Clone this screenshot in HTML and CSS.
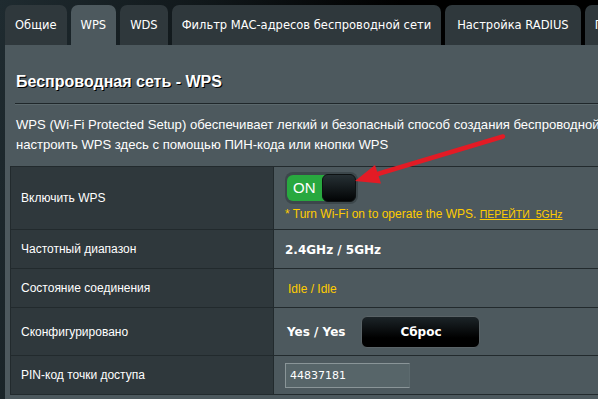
FILE: index.html
```html
<!DOCTYPE html>
<html lang="ru">
<head>
<meta charset="utf-8">
<title>WPS</title>
<link rel="stylesheet" href="styles.css">
</head>
<body>
<div class="page">
  <nav class="tabs">
    <div class="tab">Общие</div>
    <div class="tab active">WPS</div>
    <div class="tab">WDS</div>
    <div class="tab">Фильтр MAC-адресов беспроводной сети</div>
    <div class="tab tab-wide">Настройка RADIUS</div>
    <div class="tab">Профессионально</div>
  </nav>
  <main class="panel">
    <h1 class="title">Беспроводная сеть - WPS</h1>
    <div class="rule"></div>
    <p class="desc">WPS (Wi-Fi Protected Setup) обеспечивает легкий и безопасный способ создания беспроводной сети. Вы можете<br>настроить WPS здесь с помощью ПИН-кода или кнопки WPS</p>
    <table class="form">
      <tr class="r-enable">
        <th>Включить WPS</th>
        <td>
          <div class="toggle">
            <div class="toggle-on">ON</div>
            <div class="toggle-knob"></div>
          </div>
          <div class="note">* Turn Wi-Fi on to operate the WPS. <a class="note-link" href="#">ПЕРЕЙТИ&nbsp; 5GHz</a></div>
        </td>
      </tr>
      <tr class="r-std">
        <th>Частотный диапазон</th>
        <td><span class="bold-val">2.4GHz / 5GHz</span></td>
      </tr>
      <tr class="r-std">
        <th>Состояние соединения</th>
        <td><span class="status">Idle / Idle</span></td>
      </tr>
      <tr class="r-conf">
        <th>Сконфигурировано</th>
        <td>
          <div class="conf">
            <span class="bold-val">Yes / Yes</span>
            <button class="btn" type="button">Сброс</button>
          </div>
        </td>
      </tr>
      <tr class="r-std">
        <th>PIN-код точки доступа</th>
        <td><input class="pin" type="text" value="44837181"></td>
      </tr>
    </table>
  </main>
  <svg class="arrow" width="598" height="399" viewBox="0 0 598 399">
    <line x1="503" y1="136.5" x2="376" y2="174.5" stroke="#e31b25" stroke-width="4.5" stroke-linecap="round"/>
    <polygon points="355,181 375,165 381,183.5" fill="#e31b25"/>
  </svg>
</div>
</body>
</html>
```

FILE: styles.css
```css
html, body {
  margin: 0;
  padding: 0;
}
body {
  width: 598px;
  height: 399px;
  overflow: hidden;
  background: #000;
}
.page {
  position: relative;
  width: 598px;
  height: 399px;
  overflow: hidden;
  padding: 5px 0 0 5px;
  box-sizing: border-box;
  background: linear-gradient(100deg, #1f2b30 0%, #11181b 30%, #000 60%);
}
.tabs {
  display: flex;
  gap: 4px;
  height: 40px;
  white-space: nowrap;
}
.tab {
  flex: none;
  height: 40px;
  line-height: 40px;
  padding: 0 10px;
  background: #2f383c;
  border-radius: 7px 7px 0 0;
  color: #fff;
  font-family: "DejaVu Sans", Verdana, sans-serif;
  font-size: 11.5px;
}
.tab-wide {
  padding: 0 12px;
}
.tab.active {
  background: #4d595e;
}
.panel {
  width: 900px;
  height: 400px;
  background: #4d595e;
  padding-top: 27px;
}
.title {
  margin: 0;
  padding-left: 11px;
  font-family: "Liberation Sans", Arial, sans-serif;
  font-size: 16px;
  font-weight: bold;
  line-height: 19px;
  color: #fff;
  text-shadow: 1px 1px 0 #000;
}
.rule {
  margin: 12px 0 0 10px;
  height: 1px;
  background: #1f272a;
  border-bottom: 1px solid #5b686c;
}
.desc {
  margin: 10px 0 0 0;
  padding-left: 11px;
  font-family: "Liberation Sans", Arial, sans-serif;
  font-size: 13.1px;
  line-height: 20px;
  color: #fff;
  white-space: nowrap;
}
.form {
  margin: 11px 0 0 5px;
  border-collapse: collapse;
  width: 800px;
}
.form th, .form td {
  border: 1px solid #222a2d;
  padding: 0;
}
.form th {
  width: 252px;
  background: #2f383c;
  color: #fff;
  font-family: "Liberation Sans", Arial, sans-serif;
  font-size: 12px;
  font-weight: normal;
  text-align: left;
  padding-left: 10px;
}
.form td {
  background: #4d595e;
  padding-left: 11px;
  vertical-align: middle;
}
.r-enable { height: 63px; }
.r-std { height: 39px; }
.r-conf { height: 48px; }

.toggle {
  display: flex;
  width: 73px;
  height: 32px;
  box-sizing: border-box;
  padding: 2px;
  border-radius: 8px;
  background: #3c474b;
  margin-top: 4px;
}
.toggle-on {
  width: 38px;
  margin: 1px 0;
  background: #28a83f;
  border-radius: 6px 0 0 6px;
  color: #fff;
  font-family: "Liberation Sans", Arial, sans-serif;
  font-size: 15px;
  line-height: 26px;
  padding-left: 6px;
  box-sizing: border-box;
}
.toggle-knob {
  flex: 1;
  margin-left: -3px;
  background: linear-gradient(#263034, #020405);
  border: 1px solid #0d1112;
  border-radius: 6px;
}
.note {
  margin-top: 3px;
  margin-bottom: 7px;
  color: #ffcc00;
  font-family: "Liberation Sans", Arial, sans-serif;
  font-size: 12px;
  line-height: 15px;
  white-space: nowrap;
}
.note-link {
  color: #ffcc00;
  font-size: 10.5px;
  text-decoration: underline;
}
.bold-val {
  color: #fff;
  font-family: "DejaVu Sans", Verdana, sans-serif;
  font-size: 12px;
  font-weight: bold;
}
.status {
  color: #ffcc00;
  font-family: "Liberation Sans", Arial, sans-serif;
  font-size: 12px;
  padding-left: 3px;
}
.conf {
  display: flex;
  align-items: center;
  gap: 16px;
  padding-left: 2px;
}
.btn {
  width: 119px;
  height: 32px;
  border: 1px solid #5a6367;
  border-radius: 6px;
  background: linear-gradient(#1c2428, #000 70%);
  color: #fff;
  font-family: "DejaVu Sans", Verdana, sans-serif;
  font-size: 12px;
  font-weight: bold;
}
.pin {
  display: block;
  width: 125px;
  height: 25px;
  box-sizing: border-box;
  margin: 0;
  padding: 0 0 0 4px;
  background: #576569;
  border: 1px solid #8a9598;
  border-right-color: #5d6b6f;
  color: #fff;
  font-family: "DejaVu Sans", Verdana, sans-serif;
  font-size: 11px;
}
.arrow {
  position: absolute;
  left: 0;
  top: 0;
  pointer-events: none;
}
```
